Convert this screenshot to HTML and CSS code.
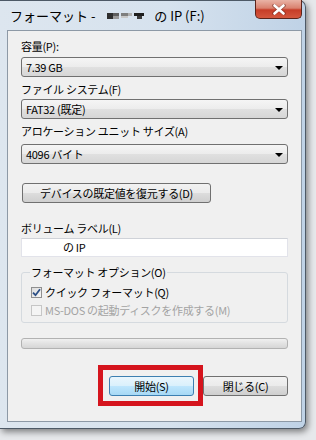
FILE: index.html
```html
<!DOCTYPE html>
<html lang="ja">

<head>
    <meta charset="UTF-8">
    <meta name="viewport" content="width=device-width, initial-scale=1.0">
    <title>フォーマット</title>
    <link rel="stylesheet" href="styles.css">
</head>

<body>
    <div class="window">
        <div class="titlebar">
            <span class="title">フォーマット -
                <svg class="masked-name" width="38" height="8" viewBox="0 0 38 8">
                    <rect x="0" y="1" width="6" height="6" fill="#2e2e2e"/>
                    <rect x="6" y="1" width="6" height="3" fill="#5e5e5e"/>
                    <rect x="6" y="4" width="6" height="3" fill="#9a9a9a"/>
                    <rect x="14" y="1" width="7" height="3" fill="#7e7e7e"/>
                    <rect x="21" y="1" width="4" height="3" fill="#b0b0b0"/>
                    <rect x="14" y="4" width="7" height="2" fill="#c8c8c8"/>
                    <rect x="27" y="1" width="10" height="3" fill="#1e1e1e"/>
                    <rect x="30" y="4" width="5" height="3" fill="#3a3a3a"/>
                </svg>
                の IP (F:)</span>
            <div class="close">
                <svg width="14" height="11" viewBox="0 0 14 11">
                    <path d="M2 1.5 L12 9.5 M12 1.5 L2 9.5" stroke="#5a1a12" stroke-width="3.6" stroke-linecap="round" opacity="0.5"/>
                    <path d="M2.5 1.5 L11.5 9.5 M11.5 1.5 L2.5 9.5" stroke="#ffffff" stroke-width="2.6" stroke-linecap="round"/>
                </svg>
            </div>
        </div>

        <div class="client">
            <label class="field-label">容量(P):</label>
            <div class="combo"><span>7.39 GB</span><span class="arrow"></span></div>

            <label class="field-label gap-label">ファイル システム(F)</label>
            <div class="combo combo-2"><span>FAT32 (既定)</span><span class="arrow"></span></div>

            <label class="field-label gap-label">アロケーション ユニット サイズ(A)</label>
            <div class="combo combo-3"><span>4096 バイト</span><span class="arrow"></span></div>

            <div class="restore-row">
                <button class="btn btn-restore" type="button">デバイスの既定値を復元する(D)</button>
            </div>

            <label class="field-label volume-label">ボリューム ラベル(L)</label>
            <div class="textbox"><span class="masked-text"></span>の IP</div>

            <fieldset class="options">
                <legend>フォーマット オプション(O)</legend>
                <div class="check">
                    <span class="box">
                        <svg width="9" height="9" viewBox="0 0 9 9">
                            <path d="M1 4.6 L3.5 7.2 L8 1.2" fill="none" stroke="#2c4f86" stroke-width="1.8"/>
                        </svg>
                    </span>
                    クイック フォーマット(Q)
                </div>
                <div class="check disabled">
                    <span class="box"></span>
                    MS-DOS の起動ディスクを作成する(M)
                </div>
            </fieldset>

            <div class="progress"></div>

            <div class="actions">
                <div class="highlight">
                    <button class="btn btn-default" type="button">開始(S)</button>
                </div>
                <button class="btn" type="button">閉じる(C)</button>
            </div>
        </div>
    </div>
</body>

</html>
```

FILE: styles.css
```css
body {
    margin: 0;
    background-color: #e6e8eb;
    font-family: "Noto Sans CJK JP", "Noto Sans", sans-serif;
    font-size: 11px;
    letter-spacing: -0.3px;
    color: #000000;
    width: 316px;
    height: 440px;
    overflow: hidden;
}

.window {
    width: 306px;
    height: 429px;
    box-sizing: border-box;
    border: 1px solid #4d5966;
    border-left: none;
    border-radius: 0 7px 7px 0;
    background: linear-gradient(to right, #dde6ef 0%, #d6e2ee 55%, #bfd2e6 100%);
    box-shadow: 2px 3px 6px rgba(0, 0, 0, 0.45);
    display: flex;
    flex-direction: column;
}

.titlebar {
    height: 29px;
    display: flex;
    justify-content: space-between;
    align-items: flex-start;
}

.title {
    padding: 7px 0 0 10px;
    font-size: 13px;
    letter-spacing: 0;
    line-height: 16px;
    white-space: nowrap;
}

.masked-name {
    vertical-align: 1px;
    margin: 0 6px 0 9px;
}

.close {
    width: 47px;
    height: 19px;
    margin-right: 3px;
    margin-top: -1px;
    box-sizing: border-box;
    border: 1px solid #5b241b;
    border-top: none;
    border-radius: 0 0 5px 5px;
    background: linear-gradient(#e9b3a6 0%, #d9816f 45%, #c63d28 55%, #d4573e 100%);
    display: flex;
    justify-content: center;
    align-items: center;
}

.client {
    flex: 1;
    margin: 0 3px 6px 7px;
    border: 1px solid #8d99a6;
    background-color: #f0f0f0;
    padding: 7px 13px 0 13px;
    display: flex;
    flex-direction: column;
}

.field-label {
    display: block;
    line-height: 16px;
    height: 16px;
    white-space: nowrap;
}

.gap-label {
    margin-top: 4px;
}

.combo {
    margin-top: 3px;
    height: 20px;
    box-sizing: border-box;
    border: 1px solid #707070;
    border-radius: 3px;
    background: linear-gradient(#f5f5f5 0%, #ececec 50%, #e0e0e0 51%, #d6d6d6 100%);
    display: flex;
    justify-content: space-between;
    align-items: center;
    padding: 0 4px 0 4px;
    line-height: 16px;
}

.combo-2 {
    margin-top: 2px;
}

.combo-3 {
    margin-top: 5px;
}

.arrow {
    width: 0;
    height: 0;
    border-left: 4px solid transparent;
    border-right: 4px solid transparent;
    border-top: 4px solid #000000;
    margin-top: 2px;
}

.restore-row {
    margin-top: 19px;
    display: flex;
}

.btn {
    font-family: inherit;
    font-size: 11px;
    letter-spacing: -0.3px;
    color: #000000;
    height: 20px;
    box-sizing: border-box;
    padding: 0;
    border: 1px solid #707070;
    border-radius: 3px;
    background: linear-gradient(#f2f2f2 0%, #ebebeb 50%, #dddddd 51%, #cfcfcf 100%);
    line-height: 16px;
    width: 85px;
}

.btn-restore {
    width: 189px;
    margin-left: 1px;
}

.volume-label {
    margin-top: 17px;
}

.textbox {
    margin-top: 2px;
    height: 19px;
    box-sizing: border-box;
    border: 1px solid #e2e3ea;
    border-top-color: #cfd2d8;
    background-color: #ffffff;
    line-height: 17px;
    padding-left: 41px;
}

.options {
    margin: 7px 0 0 0;
    padding: 3px 0 3px 8px;
    border: 1px solid #d5dadf;
    border-radius: 3px;
    min-width: 0;
}

.options legend {
    padding: 0 1px;
    line-height: 16px;
}

.check {
    display: flex;
    align-items: center;
    height: 18px;
    line-height: 16px;
    white-space: nowrap;
    gap: 3px;
}

.box {
    width: 11px;
    height: 11px;
    box-sizing: border-box;
    border: 1px solid #8f8f8f;
    background: linear-gradient(135deg, #dcdcdc 0%, #f6f6f6 100%);
    display: flex;
    justify-content: center;
    align-items: center;
    margin-left: 1px;
}

.check.disabled {
    color: #a3a3a3;
}

.check.disabled .box {
    border-color: #c6c6c6;
    background: #f4f4f4;
}

.progress {
    margin-top: 15px;
    height: 11px;
    box-sizing: border-box;
    border: 1px solid #b2b2b2;
    border-radius: 3px;
    background: linear-gradient(#f0f0f0 0%, #e2e2e2 50%, #d6d6d6 100%);
}

.actions {
    margin-top: 16px;
    display: flex;
    justify-content: flex-end;
    align-items: center;
}

.highlight {
    border: 5px solid #d5141d;
    padding: 6px 4px 5px 6px;
    display: flex;
}

.btn-default {
    border-color: #3c7fb1;
    background: linear-gradient(#eaf6fd 0%, #d9f0fc 50%, #bee6fd 51%, #a7d9f5 100%);
}
```
